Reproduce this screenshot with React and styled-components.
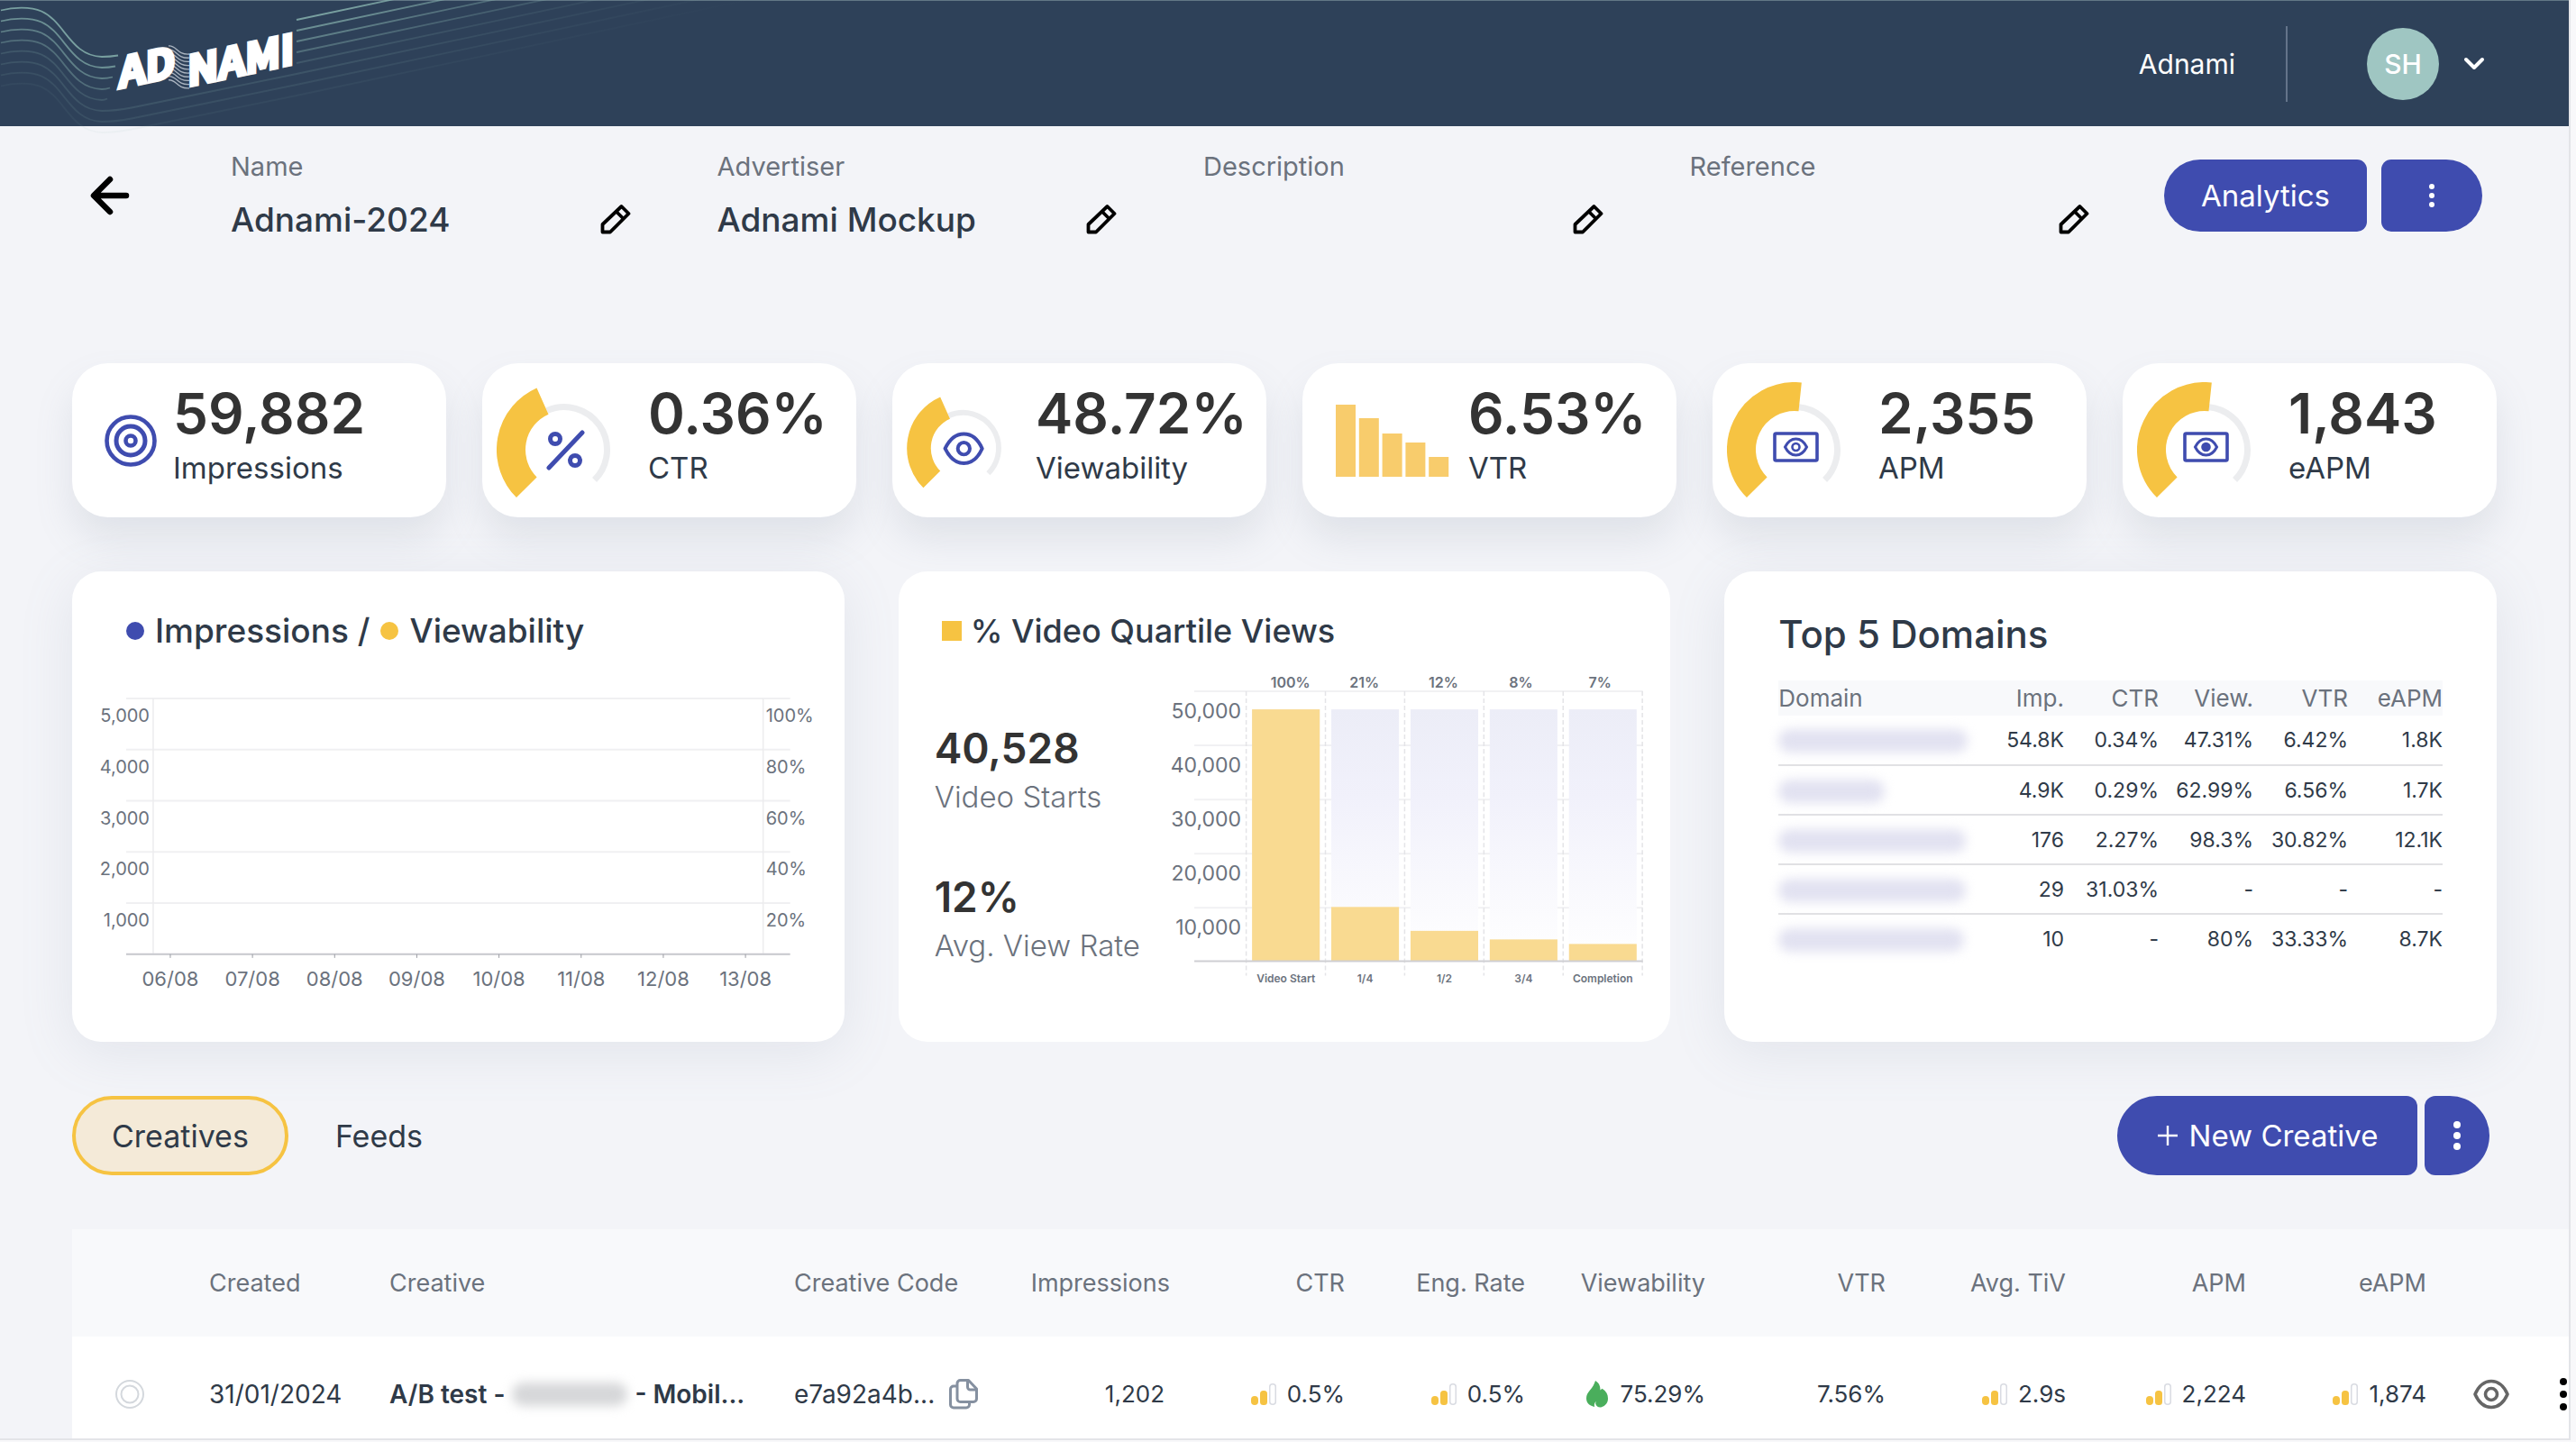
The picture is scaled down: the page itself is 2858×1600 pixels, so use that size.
import React from "react";
import styled, { createGlobalStyle, css } from "styled-components";

const color = {
  navy: "#2e4159",
  page: "#f3f4f8",
  ink: "#2f3a48",
  number: "#333333",
  muted: "#6b727d",
  blue: "#3f4caf",
  yellow: "#f6c342",
  line: "#e3e4e8",
};

const GlobalStyle = createGlobalStyle`
  *, *::before, *::after { box-sizing: border-box; }
  body {
    margin: 0;
    background: #f8f8fa;
    color: ${color.ink};
    font-family: Inter, "Open Sans", sans-serif;
  }
  button { font: inherit; color: inherit; border: 0; padding: 0; background: none; cursor: pointer; }
  h1, h2, p, dl, dd, dt { margin: 0; font-weight: 400; }
  svg { display: block; flex: none; }
`;

/* ---------- shell ---------- */

const Shell = styled.div`
  height: calc(100vh - 2px);
  margin-right: 6px;
  border-right: 2px solid ${color.line};
  border-bottom: 2px solid ${color.line};
  background: ${color.page};
  overflow: auto;
  scrollbar-width: none;
`;

const Header = styled.header`
  position: relative;
  display: flex;
  justify-content: flex-end;
  align-items: center;
  height: 140px;
  padding-right: 92px;
  border-top: 1px solid #627886;
  background: ${color.navy};
  color: #fff;
`;

const LogoLink = styled.a`
  position: absolute;
  top: -1px;
  left: 0;
`;

const Account = styled.span`
  padding-right: 56px;
  font-size: 30px;
  line-height: 84px;
  border-right: 2px solid #64748a;
`;

const UserButton = styled.button`
  display: flex;
  align-items: center;
  gap: 26px;
  margin-left: 88px;
`;

const Avatar = styled.span`
  display: grid;
  place-items: center;
  width: 80px;
  height: 80px;
  border-radius: 50%;
  background: #9fc6c2;
  font-size: 30px;
  font-weight: 500;
`;

const Page = styled.main`
  display: flex;
  flex-direction: column;
  gap: 60px;
`;

/* ---------- campaign details ---------- */

const Details = styled.section`
  display: flex;
  align-items: flex-start;
  min-height: 203px;
  padding: 25px 96px 0 98px;
`;

const BackButton = styled.button`
  display: grid;
  place-items: center;
  width: 48px;
  height: 104px;
`;

const Fields = styled.dl`
  flex: 1;
  display: grid;
  grid-template-columns: repeat(4, 1fr);
  gap: 96px;
  margin-left: 110px;
`;

const FieldLabel = styled.dt`
  font-size: 29px;
  line-height: 40px;
  color: ${color.muted};
`;

const FieldValue = styled.dd`
  display: flex;
  align-items: center;
  justify-content: space-between;
  height: 54px;
  margin-top: 11px;
  font-size: 37px;
  font-weight: 500;
`;

const SplitButtons = styled.div`
  display: flex;
  gap: ${(p) => p.$gap}px;
  margin-left: ${(p) => p.$offset || 0}px;
  margin-top: ${(p) => p.$drop || 0}px;
`;

const PrimaryButton = styled.button`
  display: flex;
  align-items: center;
  justify-content: center;
  gap: 12px;
  width: ${(p) => p.$width}px;
  height: ${(p) => p.$height}px;
  border-radius: ${(p) => (p.$end ? "12px 44px 44px 12px" : "44px 12px 12px 44px")};
  background: ${color.blue};
  color: #fff;
  font-size: 33px;
  white-space: nowrap;
`;

/* ---------- stat cards ---------- */

const StatGrid = styled.section`
  display: grid;
  grid-template-columns: repeat(6, 1fr);
  gap: 40px;
  padding: 0 80px;
`;

const StatCard = styled.article`
  display: flex;
  align-items: center;
  gap: 18px;
  height: 171px;
  padding-left: 16px;
  border-radius: 40px;
  background: #fff;
  box-shadow: 0 24px 40px rgba(130, 142, 160, 0.17);
`;

const StatText = styled.div`
  padding-bottom: 12px;
  white-space: nowrap;
`;

const StatNumber = styled.p`
  font-size: 62px;
  line-height: 72px;
  font-weight: 600;
  color: ${color.number};
`;

const StatLabel = styled.p`
  font-size: 33px;
  line-height: 48px;
`;

/* ---------- panels ---------- */

const PanelGrid = styled.section`
  display: grid;
  grid-template-columns: repeat(3, 1fr);
  gap: 60px;
  padding: 0 80px;
`;

const Panel = styled.article`
  min-height: 522px;
  padding-top: 39px;
  border-radius: 32px;
  background: #fff;
  ${(p) => !p.$flat && css`box-shadow: 0 12px 60px rgba(130, 142, 160, 0.14);`}
`;

const PanelTitle = styled.h2`
  display: flex;
  align-items: center;
  gap: ${(p) => p.$gap || 10}px;
  padding-left: ${(p) => p.$indent}px;
  font-size: ${(p) => p.$size}px;
  line-height: ${(p) => (p.$size > 40 ? 62 : 54)}px;
  font-weight: 500;
`;

const Marker = styled.span`
  width: ${(p) => (p.$square ? 22 : 20)}px;
  height: ${(p) => (p.$square ? 22 : 20)}px;
  border-radius: ${(p) => (p.$square ? 0 : "50%")};
  background: ${(p) => p.$color};
`;

const ChartSvg = styled.svg`
  width: 100%;
  height: auto;
  font-family: inherit;
  fill: ${color.muted};
`;

const QuartileBody = styled.div`
  display: grid;
  grid-template-columns: 288px 1fr;
`;

const QuartileStats = styled.div`
  display: flex;
  flex-direction: column;
  gap: 57px;
  padding: 73px 0 0 40px;
  white-space: nowrap;
`;

const QuartileNumber = styled.p`
  font-size: 46px;
  line-height: 60px;
  font-weight: 600;
  color: ${color.number};
`;

const QuartileLabel = styled.p`
  font-size: 33px;
  line-height: 48px;
  font-weight: 300;
  color: ${color.muted};
`;

const DomainTable = styled.table`
  width: calc(100% - 120px);
  margin: 20px 60px 0;
  border-collapse: collapse;
  table-layout: fixed;
  font-size: 23px;

  th, td {
    width: 105px;
    padding: 0;
    text-align: right;
    white-space: nowrap;
  }
  th:first-child, td:first-child {
    width: auto;
    text-align: left;
  }
  th {
    height: 39px;
    background: #f8f9fb;
    color: ${color.muted};
    font-size: 26px;
    line-height: 38px;
    font-weight: 400;
  }
  td { height: 55px; }
  tbody tr + tr td { border-top: 2px solid #e1e1e4; }
`;

const Redacted = styled.span`
  display: inline-block;
  vertical-align: middle;
  width: ${(p) => p.$width}px;
  height: 26px;
  border-radius: 13px;
  background: ${(p) => p.$tint};
  filter: blur(6px);
`;

/* ---------- tabs ---------- */

const Toolbar = styled.section`
  display: flex;
  justify-content: space-between;
  padding: 0 88px 0 80px;
`;

const Tabs = styled.div`
  display: flex;
  gap: 8px;
`;

const Tab = styled.button`
  height: 88px;
  padding: 0 40px;
  border: 4px solid ${(p) => (p.$active ? color.yellow : "transparent")};
  border-radius: 44px;
  background: ${(p) => (p.$active ? "#f4ead8" : "transparent")};
  font-size: 34px;
`;

/* ---------- creatives table ---------- */

const CreativeTable = styled.table`
  width: calc(100% - 80px);
  margin-left: 80px;
  border-collapse: collapse;
  table-layout: fixed;
  background: #fff;
  font-size: 28px;

  th {
    height: 119px;
    padding: 0;
    background: #f8f9fb;
    color: ${color.muted};
    font-size: 27px;
    font-weight: 400;
  }
  td { height: 127px; padding: 0; }
`;

const HeadCell = styled.th`
  width: ${(p) => (p.$width ? p.$width + "px" : "auto")};
  text-align: ${(p) => (p.$left ? "left" : "right")};
  white-space: nowrap;
`;

const CellContent = styled.div`
  display: flex;
  align-items: center;
  justify-content: ${(p) => (p.$left ? "flex-start" : "flex-end")};
  gap: ${(p) => p.$gap || 12}px;
  padding-left: ${(p) => p.$inset || 0}px;
  padding-right: ${(p) => p.$trim || 0}px;
  font-size: ${(p) => (p.$metric ? 26 : 28)}px;
  font-weight: ${(p) => (p.$strong ? 600 : 400)};
  white-space: nowrap;
`;

const IconButton = styled.button`
  display: inline-flex;
  vertical-align: middle;
`;

/* ---------- icons ---------- */

const waveOpacity = [0.85, 0.7, 0.55, 0.4, 0.2, 0.17, 0.13, 0.07];

function Logo() {
  return (
    <svg width="880" height="152" viewBox="0 0 880 152" role="img" aria-label="Adnami">
      <defs>
        <linearGradient id="waveFade" gradientUnits="userSpaceOnUse" x1="0" y1="0" x2="860" y2="0">
          <stop offset="0" stopColor="#85b0ac" />
          <stop offset="0.45" stopColor="#85b0ac" />
          <stop offset="1" stopColor="#85b0ac" stopOpacity="0" />
        </linearGradient>
      </defs>
      <g fill="none" stroke="url(#waveFade)" strokeWidth="1.8">
        {waveOpacity.map((opacity, i) => {
          const y = 12 * i;
          const start = `M1 ${11.5 + y} C14 ${8 + y} 34 ${7 + y} 46 ${12.5 + y} C72 ${24 + y} 78 ${62 + y} 113 ${63 + y}`;
          const end = 131 - 3 * i;
          return (
            <g key={i} opacity={opacity}>
              {i < 5 ? (
                <>
                  <path d={`${start} Q${(113 + end) / 2} ${63 + y} ${end} ${61.5 + y}`} />
                  <path d={`M329 ${22 + y} L880 ${22 + y - 551 * 0.212}`} />
                </>
              ) : (
                <path d={`${start} Q128 ${63 + y} 146 ${59.5 + y} L329 ${22 + y} L880 ${22 + y - 551 * 0.212}`} />
              )}
            </g>
          );
        })}
      </g>
      <g fill="none" stroke="#aab4c0" strokeWidth="1.3">
        {Array.from({ length: 10 }, (_, i) => (
          <path key={i} d={`M187 ${51 + i * 4.2} C196 ${50 + i * 4.2} 196 ${61 + i * 4.2} 210 ${60 + i * 4.2}`} />
        ))}
      </g>
      <g
        fill="#fff"
        stroke="#fff"
        strokeWidth="4"
        fontFamily='"Noto Sans CJK JP", "Liberation Sans", sans-serif'
        fontSize="46"
        fontWeight="700"
      >
        <text transform="translate(132 98) skewY(-12)">AD</text>
        <text transform="translate(208 96) skewY(-12)">NAMI</text>
      </g>
    </svg>
  );
}

function ChevronDown() {
  return (
    <svg width="26" height="18" viewBox="0 0 26 18" fill="none" stroke="#fff" strokeWidth="4" strokeLinecap="round" strokeLinejoin="round">
      <path d="M4 4l9 9 9-9" />
    </svg>
  );
}

function ArrowLeft() {
  return (
    <svg width="46" height="46" viewBox="0 0 46 46" fill="none" stroke="#000" strokeWidth="6.5" strokeLinecap="round" strokeLinejoin="round">
      <path d="M41 23H6M23 5L5 23l18 18" />
    </svg>
  );
}

function Pencil() {
  return (
    <svg width="34" height="34" viewBox="0 0 34 34" fill="none" stroke="#000" strokeWidth="3.8" strokeLinejoin="round">
      <path d="M2.5 31.5v-8.5L23.5 3l8 8L11 31.500z" />
      <path d="M17.500 8.500l8 8" />
    </svg>
  );
}

function Kebab({ gap = 10, r = 3, fill = "#fff" }) {
  const c = gap + r + 1;
  return (
    <svg width={2 * r + 2} height={2 * c} viewBox={`0 0 ${2 * r + 2} ${2 * c}`} fill={fill}>
      {[-1, 0, 1].map((k) => (
        <circle key={k} cx={r + 1} cy={c + k * gap} r={r} />
      ))}
    </svg>
  );
}

function Plus() {
  return (
    <svg width="24" height="24" viewBox="0 0 24 24" stroke="#fff" strokeWidth="2.4">
      <path d="M12 1v22M1 12h22" />
    </svg>
  );
}

function Target() {
  return (
    <svg width="78" height="58" viewBox="0 0 78 58" fill="none" stroke={color.blue}>
      <circle cx="49" cy="29" r="26.500" strokeWidth="4.600" />
      <circle cx="49" cy="29" r="16" strokeWidth="5" />
      <circle cx="49" cy="29" r="5.500" strokeWidth="4.600" />
    </svg>
  );
}

const onCircle = (r, deg) => {
  const a = (deg * Math.PI) / 180;
  return `${75 + r * Math.sin(a)} ${75 - r * Math.cos(a)}`;
};
const arc = (r, from, to) =>
  `M${onCircle(r, from)} A${r} ${r} 0 ${to - from > 180 ? 1 : 0} 1 ${onCircle(r, to)}`;

function Gauge({ to, width = 150, children }) {
  return (
    <svg width={width} height={Math.round((width * 130) / 150)} viewBox="0 0 150 130" fill="none">
      <path d={arc(47.500, to, 135)} stroke="#ecedef" strokeWidth="7" />
      <path d={arc(59, -135, to)} stroke={color.yellow} strokeWidth="32" />
      {children}
    </svg>
  );
}

function PercentMark() {
  return (
    <g stroke={color.blue} strokeWidth="5" strokeLinecap="round">
      <path d="M58 95L95 56" />
      <circle cx="65" cy="63" r="5.500" />
      <circle cx="87" cy="87" r="5.500" />
    </g>
  );
}

function EyeMark() {
  return (
    <g stroke={color.blue} strokeWidth="4.800" strokeLinejoin="round">
      <path d="M51 75.500C57 63 65 56 76 56s19 7 24.500 19.500C95 88 87 95 76 95s-19-7-25-19.500z" />
      <circle cx="76" cy="75.500" r="8" />
    </g>
  );
}

function BanknoteMark({ solid }) {
  return (
    <g stroke={color.blue} strokeWidth="3.600">
      <rect x="53" y="57" width="47" height="30" rx="1.500" />
      <path d="M64.500 72c3-6 7-9 12-9s9 3 12 9c-3 6-7 9-12 9s-9-3-12-9z" strokeWidth="3" />
      <circle cx="76.500" cy="72" r="4" strokeWidth="2.600" fill={solid ? color.blue : "none"} />
    </g>
  );
}

function FallingBars() {
  const tops = [0, 15, 32, 42, 58];
  return (
    <svg width="150" height="80" viewBox="0 0 150 80" fill="#f8cc6c">
      {tops.map((y, i) => (
        <rect key={y} x={21 + i * 25.800} y={y} width="22" height={80 - y} />
      ))}
    </svg>
  );
}

function StatusRing() {
  return (
    <svg width="32" height="32" viewBox="0 0 32 32" fill="none" stroke="#d4d8dd" strokeWidth="2">
      <circle cx="16" cy="16" r="15" />
      <circle cx="16" cy="16" r="9.500" />
    </svg>
  );
}

function Copy() {
  return (
    <svg width="32" height="34" viewBox="0 0 32 34" fill="none" stroke="#8590a0" strokeWidth="3" strokeLinejoin="round">
      <path d="M8 8H5a3.500 3.500 0 0 0-3.500 3.500v17A3.500 3.500 0 0 0 5 32h14a3.500 3.500 0 0 0 3.500-3.500V26" />
      <path d="M12.500 1.500h9L30.500 11v11a3.500 3.500 0 0 1-3.500 3.500H12.500A3.500 3.500 0 0 1 9 22V5a3.500 3.500 0 0 1 3.500-3.500z" />
      <path d="M20.500 2v7a3 3 0 0 0 3 3h7" />
    </svg>
  );
}

function Signal() {
  return (
    <svg width="28" height="26" viewBox="0 0 28 26" fill={color.yellow}>
      <rect x="0" y="15" width="8" height="10" rx="4" />
      <rect x="10" y="9" width="8" height="16" rx="3.500" />
      <rect x="20.750" y="1.750" width="6.500" height="22.500" rx="3" fill="none" stroke="#d9dbe2" strokeWidth="1.500" />
    </svg>
  );
}

function Flame() {
  return (
    <svg width="26" height="32" viewBox="0 0 26 32" fill="#4aae5c">
      <path d="M11 1c4 2.500 5.500 5.500 5.500 10.500l2-1.800c4.500 2.800 6.500 6.500 6.500 11 0 4.500-2.500 8-7 9.500-3 .8-6-.4-6.700-3.400-.3-1 .1-1.800.7-2.800-2 1.200-2.600 3.400-1.800 6C5 29 1 26 1 20.500c0-3.500 1.500-6 4-9C8 8 9.800 5 11 1z" />
    </svg>
  );
}

function Eye() {
  return (
    <svg width="40" height="34" viewBox="0 0 40 34" fill="none" stroke="#666" strokeWidth="3.600" strokeLinejoin="round">
      <path d="M2 17C6 8 12 2.500 20 2.500S34 8 38 17c-4 9-10 14.500-18 14.500S6 26 2 17z" />
      <circle cx="20" cy="17" r="6.500" />
    </svg>
  );
}

/* ---------- charts ---------- */

function ImpressionsChart() {
  const days = ["06/08", "07/08", "08/08", "09/08", "10/08", "11/08", "12/08", "13/08"];
  const left = ["5,000", "4,000", "3,000", "2,000", "1,000"];
  const right = ["100%", "80%", "60%", "40%", "20%"];
  const rowY = (i) => 48 + i * 56.800;
  return (
    <ChartSvg viewBox="0 0 857 428" fontSize="20">
      {left.map((label, i) => (
        <g key={label}>
          <path d={`M60 ${rowY(i)}H797`} stroke="#f0f0f2" strokeWidth="2" />
          <text x="86" y={rowY(i) + 26} textAnchor="end">{label}</text>
          <text x="770" y={rowY(i) + 26}>{right[i]}</text>
        </g>
      ))}
      <path d="M90 48V331M767 48V331" stroke="#ececee" strokeWidth="1.500" />
      <path d="M60 332H797" stroke="#c6c7cd" strokeWidth="2" />
      {days.map((day, i) => (
        <g key={day}>
          <path d={`M${109 + i * 91.200} 332v4`} stroke="#9a9ca3" />
          <text x={109 + i * 91.200} y="367" fontSize="22" textAnchor="middle">{day}</text>
        </g>
      ))}
    </ChartSvg>
  );
}

function QuartileChart() {
  const ticks = ["50,000", "40,000", "30,000", "20,000", "10,000"];
  const steps = [
    { name: "Video Start", pct: "100%", top: 60, pctX: 49 },
    { name: "1/4", pct: "21%", top: 279, pctX: 43 },
    { name: "1/2", pct: "12%", top: 305.500, pctX: 43 },
    { name: "3/4", pct: "8%", top: 315, pctX: 41 },
    { name: "Completion", pct: "7%", top: 320, pctX: 41 },
  ];
  const colX = (i) => 97.500 + i * 87.800;
  return (
    <ChartSvg viewBox="0 0 568 428">
      <defs>
        <linearGradient id="barTrack" x1="0" y1="0" x2="0" y2="1">
          <stop offset="0" stopColor="#ecedf7" />
          <stop offset="0.35" stopColor="#f1f1fb" />
          <stop offset="1" stopColor="#ffffff" />
        </linearGradient>
      </defs>
      {ticks.map((tick, i) => (
        <g key={tick}>
          <path d={`M40 ${40 + i * 60}H537`} stroke="#f1f1f3" strokeWidth="2" />
          <text x="92" y={70 + i * 60} fontSize="23" textAnchor="end">{tick}</text>
        </g>
      ))}
      {[0, 1, 2, 3, 4, 5].map((i) => (
        <path key={i} d={`M${colX(i)} 40V355`} stroke="#e4e4e7" strokeWidth="1.500" strokeDasharray="5 3" />
      ))}
      {steps.map((s, i) => (
        <g key={s.name}>
          <rect x={colX(i) + 6.500} y="60" width="75" height="279" fill="url(#barTrack)" />
          <rect x={colX(i) + 6.500} y={s.top} width="75" height={339 - s.top} fill="#f9da91" />
          <text x={colX(i) + s.pctX} y="36" fontSize="16" fontWeight="600" textAnchor="middle">{s.pct}</text>
          <text x={colX(i) + 44} y="363" fontSize="12" fontWeight="600" textAnchor="middle">{s.name}</text>
        </g>
      ))}
      <path d="M40 339H537" stroke="#cfcfd3" strokeWidth="2" />
    </ChartSvg>
  );
}

/* ---------- data ---------- */

const fields = [
  ["Name", "Adnami-2024"],
  ["Advertiser", "Adnami Mockup"],
  ["Description", ""],
  ["Reference", ""],
];

const stats = [
  { value: "59,882", label: "Impressions", icon: <Target /> },
  { value: "0.36%", label: "CTR", icon: <Gauge to={-24}><PercentMark /></Gauge> },
  { value: "48.72%", label: "Viewability", icon: <Gauge to={-24} width={125}><EyeMark /></Gauge> },
  { value: "6.53%", label: "VTR", icon: <FallingBars /> },
  { value: "2,355", label: "APM", icon: <Gauge to={6}><BanknoteMark /></Gauge> },
  { value: "1,843", label: "eAPM", icon: <Gauge to={6}><BanknoteMark solid /></Gauge> },
];

const domains = [
  { width: 210, cells: ["54.8K", "0.34%", "47.31%", "6.42%", "1.8K"] },
  { width: 118, cells: ["4.9K", "0.29%", "62.99%", "6.56%", "1.7K"] },
  { width: 208, cells: ["176", "2.27%", "98.3%", "30.82%", "12.1K"] },
  { width: 208, cells: ["29", "31.03%", "-", "-", "-"] },
  { width: 206, cells: ["10", "-", "80%", "33.33%", "8.7K"] },
];

const metrics = [
  { head: "CTR", value: "0.5%", icon: <Signal />, width: 194 },
  { head: "Eng. Rate", value: "0.5%", icon: <Signal /> },
  { head: "Viewability", value: "75.29%", icon: <Flame /> },
  { head: "VTR", value: "7.56%" },
  { head: "Avg. TiV", value: "2.9s", icon: <Signal /> },
  { head: "APM", value: "2,224", icon: <Signal /> },
  { head: "eAPM", value: "1,874", icon: <Signal /> },
];

export default function App() {
  return (
    <>
      <GlobalStyle />
      <Shell>
        <Header>
          <LogoLink href="#home"><Logo /></LogoLink>
          <Account>Adnami</Account>
          <UserButton aria-label="Account menu">
            <Avatar>SH</Avatar>
            <ChevronDown />
          </UserButton>
        </Header>

        <Page>
          <Details>
            <BackButton aria-label="Back"><ArrowLeft /></BackButton>
            <Fields>
              {fields.map(([label, value]) => (
                <div key={label}>
                  <FieldLabel>{label}</FieldLabel>
                  <FieldValue>
                    <span>{value}</span>
                    <IconButton aria-label={`Edit ${label}`}><Pencil /></IconButton>
                  </FieldValue>
                </div>
              ))}
            </Fields>
            <SplitButtons $gap={16} $offset={83} $drop={12}>
              <PrimaryButton $width={225} $height={80}>Analytics</PrimaryButton>
              <PrimaryButton $width={112} $height={80} $end aria-label="More actions"><Kebab /></PrimaryButton>
            </SplitButtons>
          </Details>

          <StatGrid>
            {stats.map((s) => (
              <StatCard key={s.label}>
                {s.icon}
                <StatText>
                  <StatNumber>{s.value}</StatNumber>
                  <StatLabel>{s.label}</StatLabel>
                </StatText>
              </StatCard>
            ))}
          </StatGrid>

          <PanelGrid>
            <Panel>
              <PanelTitle $indent={60} $size={37} $gap={12}>
                <Marker $color={color.blue} />
                Impressions /
                <Marker $color={color.yellow} />
                Viewability
              </PanelTitle>
              <ImpressionsChart />
            </Panel>

            <Panel $flat>
              <PanelTitle $indent={48} $size={36}>
                <Marker $square $color={color.yellow} />
                % Video Quartile Views
              </PanelTitle>
              <QuartileBody>
                <QuartileStats>
                  <div>
                    <QuartileNumber>40,528</QuartileNumber>
                    <QuartileLabel>Video Starts</QuartileLabel>
                  </div>
                  <div>
                    <QuartileNumber>12%</QuartileNumber>
                    <QuartileLabel>Avg. View Rate</QuartileLabel>
                  </div>
                </QuartileStats>
                <QuartileChart />
              </QuartileBody>
            </Panel>

            <Panel>
              <PanelTitle $indent={60} $size={42}>Top 5 Domains</PanelTitle>
              <DomainTable>
                <thead>
                  <tr>
                    {["Domain", "Imp.", "CTR", "View.", "VTR", "eAPM"].map((h) => <th key={h} scope="col">{h}</th>)}
                  </tr>
                </thead>
                <tbody>
                  {domains.map((d, i) => (
                    <tr key={i}>
                      <td><Redacted $width={d.width} $tint="#e2e2f1" /></td>
                      {d.cells.map((c, j) => <td key={j}>{c}</td>)}
                    </tr>
                  ))}
                </tbody>
              </DomainTable>
            </Panel>
          </PanelGrid>

          <Toolbar>
            <Tabs role="tablist">
              <Tab role="tab" aria-selected="true" $active>Creatives</Tab>
              <Tab role="tab" aria-selected="false">Feeds</Tab>
            </Tabs>
            <SplitButtons $gap={8}>
              <PrimaryButton $width={333} $height={88}><Plus />New Creative</PrimaryButton>
              <PrimaryButton $width={72} $height={88} $end aria-label="More creative actions"><Kebab gap={12} r={4} /></PrimaryButton>
            </SplitButtons>
          </Toolbar>

          <CreativeTable>
            <thead>
              <tr>
                <HeadCell $width={152} aria-label="Status" />
                <HeadCell $width={200} $left>Created</HeadCell>
                <HeadCell $left>Creative</HeadCell>
                <HeadCell $width={211} $left>Creative Code</HeadCell>
                <HeadCell $width={206}>Impressions</HeadCell>
                {metrics.map((m) => <HeadCell key={m.head} $width={m.width || 200}>{m.head}</HeadCell>)}
                <HeadCell $width={92} aria-label="Preview" />
                <HeadCell $width={66} aria-label="Actions" />
              </tr>
            </thead>
            <tbody>
              <tr>
                <td><CellContent $left $inset={48}><StatusRing /></CellContent></td>
                <td><CellContent $left>31/01/2024</CellContent></td>
                <td>
                  <CellContent $left $strong $gap={8}>
                    A/B test -
                    <Redacted $width={128} $tint="#d6d7d9" />
                    - Mobil...
                  </CellContent>
                </td>
                <td>
                  <CellContent $left $gap={16}>
                    e7a92a4b...
                    <IconButton aria-label="Copy code"><Copy /></IconButton>
                  </CellContent>
                </td>
                <td><CellContent $metric $trim={6}>1,202</CellContent></td>
                {metrics.map((m) => (
                  <td key={m.head}><CellContent $metric>{m.icon}{m.value}</CellContent></td>
                ))}
                <td><CellContent><IconButton aria-label="Preview creative"><Eye /></IconButton></CellContent></td>
                <td><CellContent $trim={1}><IconButton aria-label="Creative actions"><Kebab gap={14} r={4} fill="#000" /></IconButton></CellContent></td>
              </tr>
            </tbody>
          </CreativeTable>
        </Page>
      </Shell>
    </>
  );
}
